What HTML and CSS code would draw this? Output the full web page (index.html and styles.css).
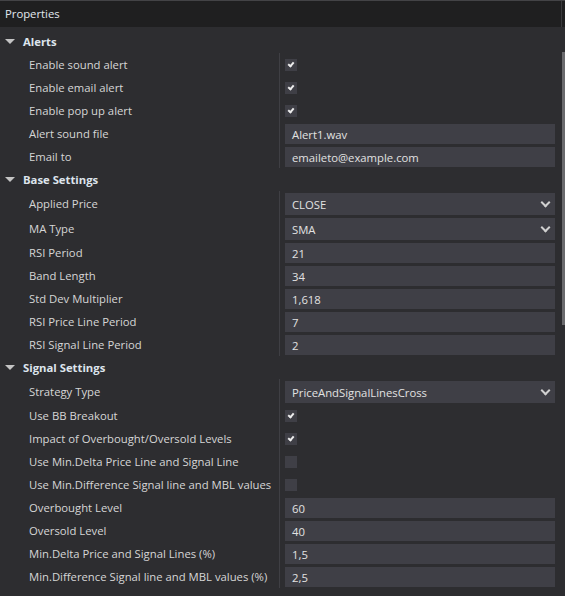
FILE: index.html
```html
<!DOCTYPE html>
<html lang="en">
  <head>
    <meta charset="UTF-8" />
    <meta name="viewport" content="width=device-width, initial-scale=1.0" />
    <title>Properties</title>
    <link rel="stylesheet" href="styles.css">
  </head>
  <body>
    <div class="panel">
      <div class="titlebar">Properties</div>

      <div class="sections">
        <!-- Alerts -->
        <div class="section">
          <div class="section-head"><span class="caret"></span>Alerts</div>
          <div class="row">
            <div class="label">Enable sound alert</div>
            <div class="value"><span class="check on"></span></div>
          </div>
          <div class="row">
            <div class="label">Enable email alert</div>
            <div class="value"><span class="check on"></span></div>
          </div>
          <div class="row">
            <div class="label">Enable pop up alert</div>
            <div class="value"><span class="check on"></span></div>
          </div>
          <div class="row">
            <div class="label">Alert sound file</div>
            <div class="value"><div class="field">Alert1.wav</div></div>
          </div>
          <div class="row">
            <div class="label">Email to</div>
            <div class="value"><div class="field">emaileto@example.com</div></div>
          </div>
        </div>

        <!-- Base Settings -->
        <div class="section">
          <div class="section-head"><span class="caret"></span>Base Settings</div>
          <div class="row">
            <div class="label">Applied Price</div>
            <div class="value"><div class="field select">CLOSE<span class="chevron"></span></div></div>
          </div>
          <div class="row">
            <div class="label">MA Type</div>
            <div class="value"><div class="field select">SMA<span class="chevron"></span></div></div>
          </div>
          <div class="row">
            <div class="label">RSI Period</div>
            <div class="value"><div class="field">21</div></div>
          </div>
          <div class="row">
            <div class="label">Band Length</div>
            <div class="value"><div class="field">34</div></div>
          </div>
          <div class="row">
            <div class="label">Std Dev Multiplier</div>
            <div class="value"><div class="field">1,618</div></div>
          </div>
          <div class="row">
            <div class="label">RSI Price Line Period</div>
            <div class="value"><div class="field">7</div></div>
          </div>
          <div class="row">
            <div class="label">RSI Signal Line Period</div>
            <div class="value"><div class="field">2</div></div>
          </div>
        </div>

        <!-- Signal Settings -->
        <div class="section">
          <div class="section-head"><span class="caret"></span>Signal Settings</div>
          <div class="row">
            <div class="label">Strategy Type</div>
            <div class="value"><div class="field select">PriceAndSignalLinesCross<span class="chevron"></span></div></div>
          </div>
          <div class="row">
            <div class="label">Use BB Breakout</div>
            <div class="value"><span class="check on"></span></div>
          </div>
          <div class="row">
            <div class="label">Impact of Overbought/Oversold Levels</div>
            <div class="value"><span class="check on"></span></div>
          </div>
          <div class="row">
            <div class="label">Use Min.Delta Price Line and Signal Line</div>
            <div class="value"><span class="check"></span></div>
          </div>
          <div class="row">
            <div class="label">Use Min.Difference Signal line and MBL values</div>
            <div class="value"><span class="check"></span></div>
          </div>
          <div class="row">
            <div class="label">Overbought Level</div>
            <div class="value"><div class="field">60</div></div>
          </div>
          <div class="row">
            <div class="label">Oversold Level</div>
            <div class="value"><div class="field">40</div></div>
          </div>
          <div class="row">
            <div class="label">Min.Delta Price and Signal Lines (%)</div>
            <div class="value"><div class="field">1,5</div></div>
          </div>
          <div class="row">
            <div class="label">Min.Difference Signal line and MBL values (%)</div>
            <div class="value"><div class="field">2,5</div></div>
          </div>
        </div>
      </div>

      <div class="scroll-thumb"></div>
    </div>
  </body>
</html>
```

FILE: styles.css
```css
body {
  margin: 0;
  background-color: #2d2d30;
  font-family: 'Open Sans', 'Noto Sans', sans-serif;
  font-size: 11.3px;
  color: #d6d6d6;
}
.panel {
  position: relative;
  width: 565px;
  height: 596px;
  overflow: hidden;
  background-color: #2d2d30;
}
.titlebar {
  height: 26px;
  line-height: 26px;
  padding-left: 5px;
  border-top: 1px solid #434346;
  background-color: #1f1f20;
  box-shadow: inset -3px 0 0 #1f1f20, inset -4px 0 0 #3a3a3d;
  color: #e2e8ee;
}
.sections {
  padding-top: 3px;
}
.section-head {
  display: flex;
  align-items: center;
  height: 23px;
  padding: 0 0 1px 5px;
  box-sizing: border-box;
  font-weight: bold;
  color: #dde4ec;
}
.caret {
  width: 0;
  height: 0;
  margin-right: 8px;
  border-left: 5px solid transparent;
  border-right: 5px solid transparent;
  border-top: 5px solid #c4c4c4;
}
.row {
  display: grid;
  grid-template-columns: 280px 1fr;
}
.label {
  display: flex;
  align-items: center;
  padding: 1px 0 2px 29px;
  border-right: 1px solid #3f3f44;
  white-space: nowrap;
}
.value {
  display: flex;
  align-items: center;
  padding: 2px 10px 1px 5px;
  min-height: 20px;
}
.field {
  flex: 1;
  display: flex;
  align-items: center;
  height: 20px;
  padding-left: 7px;
  background-color: #3f3f46;
  color: #e2e2e2;
}
.field.select {
  height: 22px;
}
.chevron {
  margin-left: auto;
  margin-right: 6px;
  width: 5px;
  height: 5px;
  border-right: 2px solid #d0d0d0;
  border-bottom: 2px solid #d0d0d0;
  transform: translateY(-2px) rotate(45deg);
}
.check {
  position: relative;
  width: 12px;
  height: 12px;
  background-color: #3f3f46;
}
.check.on::after {
  content: '';
  position: absolute;
  left: 4px;
  top: 2px;
  width: 2px;
  height: 4px;
  border-right: 2px solid #ececec;
  border-bottom: 2px solid #ececec;
  transform: rotate(40deg);
}
.scroll-thumb {
  position: absolute;
  right: 0;
  top: 52px;
  width: 3px;
  height: 273px;
  background-color: #6a6a6d;
}
```
